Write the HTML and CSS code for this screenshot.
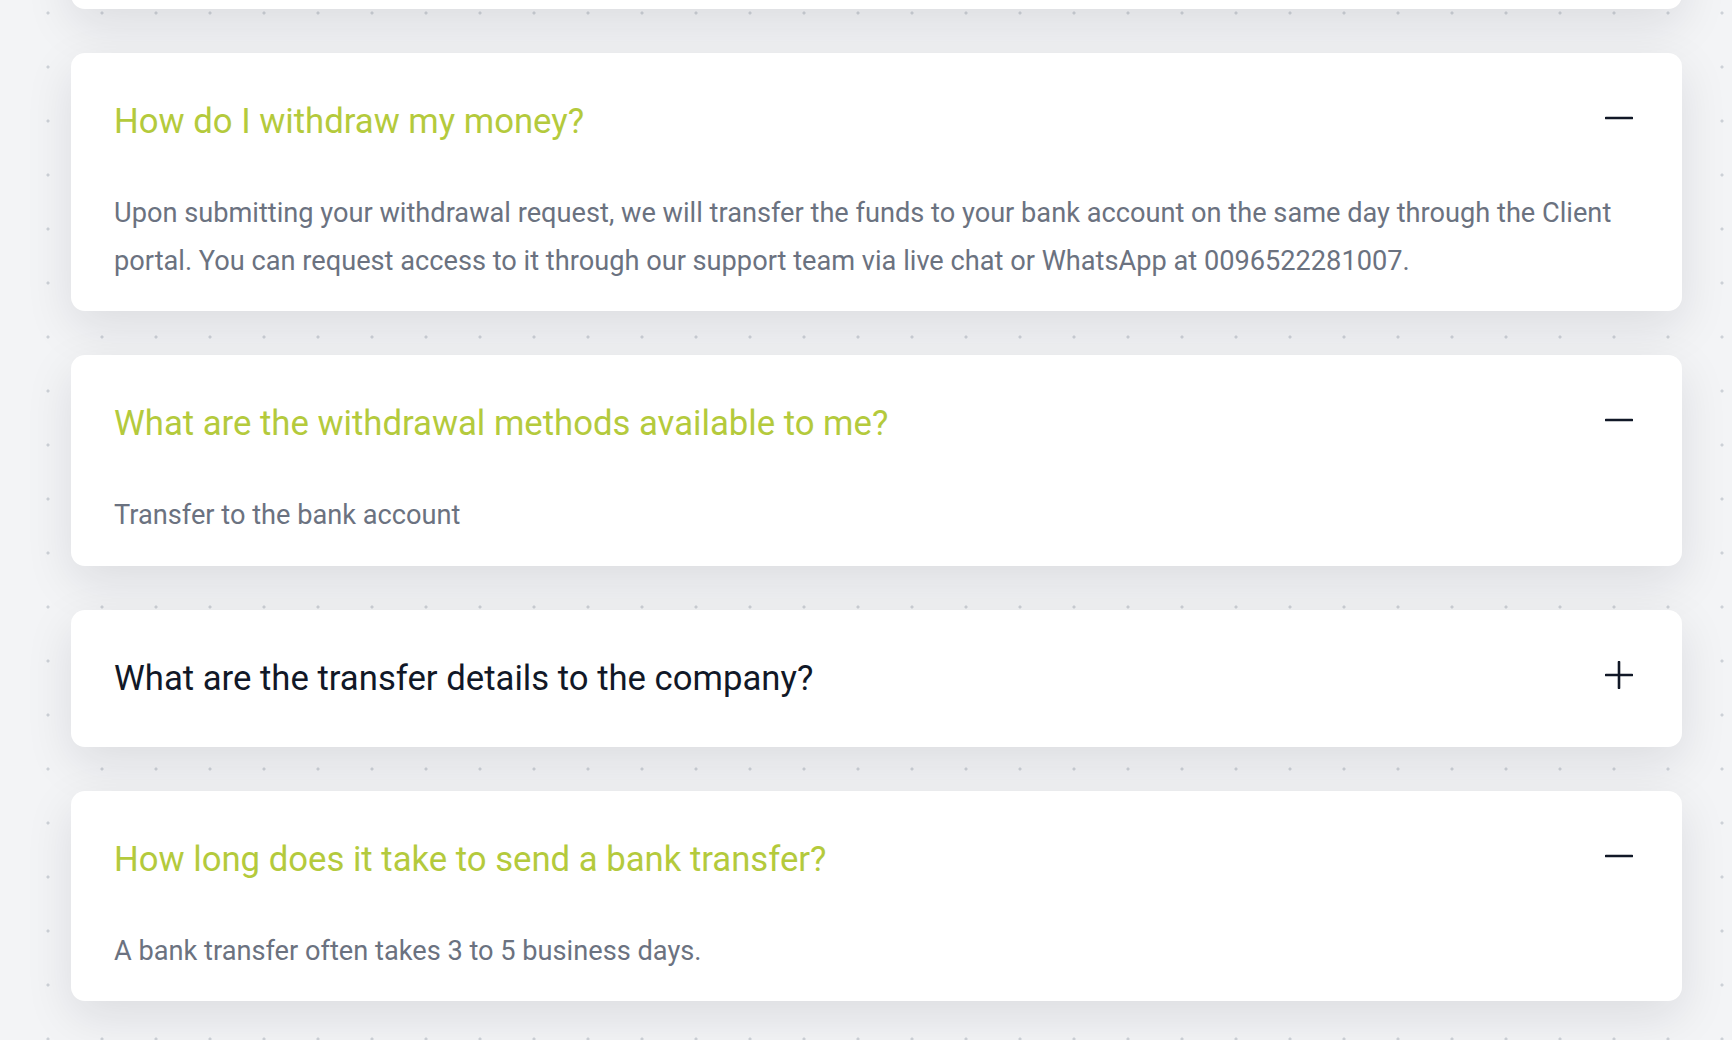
FILE: index.html
```html
<!DOCTYPE html>
<html lang="en">
<head>
<meta charset="utf-8">
<title>FAQ</title>
<link rel="stylesheet" href="styles.css">
</head>
<body>
<main class="faq">
  <section class="faq-item">
    <div class="faq-head">
      <h3 class="faq-q">How can I deposit money?</h3>
      <span class="faq-icon">
        <svg viewBox="0 0 28 28" width="28" height="28"><path d="M14 1v26M1 14h26" /></svg>
      </span>
    </div>
  </section>

  <section class="faq-item open">
    <div class="faq-head">
      <h3 class="faq-q">How do I withdraw my money?</h3>
      <span class="faq-icon">
        <svg viewBox="0 0 28 28" width="28" height="28"><path d="M1 14h26" /></svg>
      </span>
    </div>
    <p class="faq-a">Upon submitting your withdrawal request, we will transfer the funds to your bank account on the same day through the Client portal. You can request access to it through our support team via live chat or WhatsApp at 0096522281007.</p>
  </section>

  <section class="faq-item open">
    <div class="faq-head">
      <h3 class="faq-q">What are the withdrawal methods available to me?</h3>
      <span class="faq-icon">
        <svg viewBox="0 0 28 28" width="28" height="28"><path d="M1 14h26" /></svg>
      </span>
    </div>
    <p class="faq-a">Transfer to the bank account</p>
  </section>

  <section class="faq-item">
    <div class="faq-head">
      <h3 class="faq-q">What are the transfer details to the company?</h3>
      <span class="faq-icon">
        <svg viewBox="0 0 28 28" width="28" height="28"><path d="M14 1v26M1 14h26" /></svg>
      </span>
    </div>
  </section>

  <section class="faq-item open">
    <div class="faq-head">
      <h3 class="faq-q">How long does it take to send a bank transfer?</h3>
      <span class="faq-icon">
        <svg viewBox="0 0 28 28" width="28" height="28"><path d="M1 14h26" /></svg>
      </span>
    </div>
    <p class="faq-a">A bank transfer often takes 3 to 5 business days.</p>
  </section>
</main>
</body>
</html>
```

FILE: styles.css
```css
html, body {
  margin: 0;
  padding: 0;
  height: 100%;
  overflow: hidden;
}

body {
  background-color: #f3f4f6;
  background-image: radial-gradient(circle, #cdd1d7 1.2px, rgba(205, 209, 215, 0) 1.9px);
  background-size: 54px 54px;
  background-position: 21px 40px;
  font-family: Roboto, "Liberation Sans", sans-serif;
}

.faq {
  display: flex;
  flex-direction: column;
  gap: 44px;
  margin: -128px 50px 0 71px;
}

.faq-item {
  background: #ffffff;
  border-radius: 14px;
  box-shadow: 0 16px 48px rgba(17, 24, 39, 0.10);
  padding: 0 49px 0 43px;
}

.faq-item.open {
  padding-bottom: 26px;
}

.faq-head {
  display: flex;
  align-items: flex-start;
  justify-content: space-between;
  padding: 48px 0;
}

.faq-q {
  margin: 0;
  font-size: 34.7px;
  line-height: 41px;
  font-weight: 400;
  color: #111827;
}

.faq-item.open .faq-q {
  color: #b4ca3c;
}

.faq-icon {
  flex: none;
  width: 28px;
  height: 28px;
  margin-top: 3px;
  margin-left: 24px;
}

.faq-icon svg {
  display: block;
  fill: none;
  stroke: #111827;
  stroke-width: 2.6;
  stroke-linecap: round;
}

.faq-a {
  margin: 0;
  font-size: 27.2px;
  line-height: 47.5px;
  color: #6b7280;
}
```
